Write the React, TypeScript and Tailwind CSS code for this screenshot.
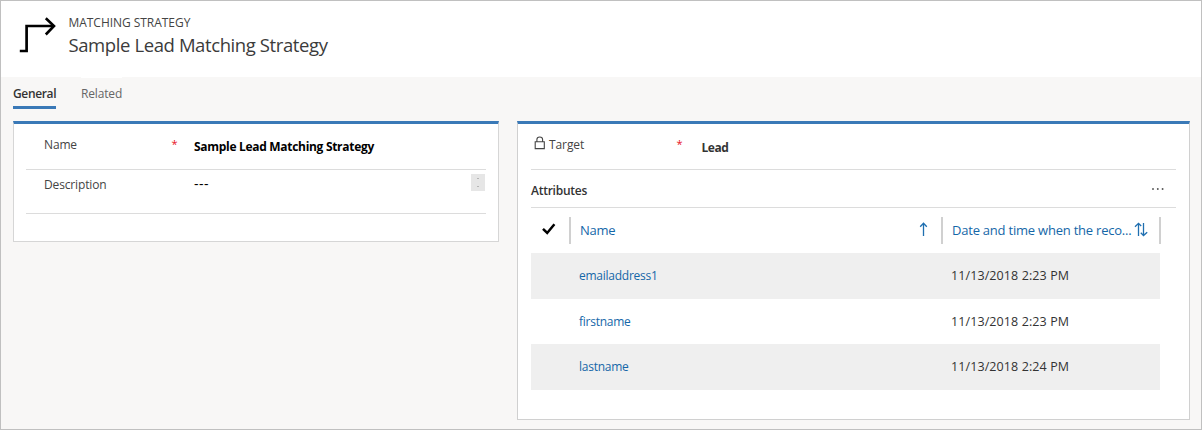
import React from 'react';

const rows = [
  { name: 'emailaddress1', date: '11/13/2018 2:23 PM', shade: true },
  { name: 'firstname', date: '11/13/2018 2:23 PM', shade: false },
  { name: 'lastname', date: '11/13/2018 2:24 PM', shade: true },
];

function SortUp() {
  return (
    <svg width="9" height="15" viewBox="0 0 9 15" fill="none" stroke="#1f6fb0" strokeWidth="1.3">
      <path d="M4.5 14V1.5M1.2 4.8L4.5 1.3L7.8 4.8" />
    </svg>
  );
}

function SortBoth() {
  return (
    <svg width="14" height="15" viewBox="0 0 14 15" fill="none" stroke="#1f6fb0" strokeWidth="1.3">
      <path d="M4.5 14V1.5M1 4.8L4.5 1.3L7.2 4M9.5 1V13.5M6.8 10.8L9.5 13.6L13.2 10.2" />
    </svg>
  );
}

export default function App() {
  return (
    <div className="flex h-[430px] w-[1202px] flex-col overflow-hidden border border-[#c0c0c0] bg-[#f8f7f6] font-['Open_Sans','Noto_Sans',sans-serif] text-[13px] text-[#333]">
      <header className="flex h-[76px] shrink-0 bg-white pl-[18px]">
        <svg className="mt-[15px] shrink-0" width="38" height="38" viewBox="0 0 38 38" fill="none" stroke="#000">
          <path d="M0.8 35H7.6V10H35" strokeWidth="2.7" />
          <path d="M26.8 2.2L35 10L26.8 18.5" strokeWidth="2.6" />
        </svg>
        <div className="ml-[11.5px] pt-[14px]">
          <div className="h-4 whitespace-nowrap text-[12px] leading-4 tracking-[-0.04px] text-[#444]">MATCHING STRATEGY</div>
          <h1 className="mt-px h-[26px] whitespace-nowrap text-[18.5px] leading-[26px] tracking-[-0.4px] text-[#3b3b3b]">Sample Lead Matching Strategy</h1>
        </div>
      </header>

      <nav className="flex h-[44px] shrink-0 pl-[12px] text-[12px] leading-[18px]">
        <div className="h-[32px] w-[43px] border-b-[3px] border-[#3a79b7] pt-[8px] font-semibold tracking-[-0.35px]">General</div>
        <div className="ml-[25px] h-[30px] border-t border-white pt-[7px] tracking-[-0.15px] text-[#666]">Related</div>
      </nav>

      <main className="flex items-start pl-[12px]">
        <section className="h-[121px] w-[486px] border border-t-[3px] border-[#d6d6d6] border-t-[#3a79b7] bg-white px-[12px]">
          <div className="flex h-[46px] border-b border-[#dcdcdc] pl-[18px]">
            <span className="w-[127.5px] pt-[12px] text-[12px] leading-[18px] tracking-[-0.15px] text-[#444]">Name</span>
            <span className="w-[22.5px] pt-[11px] text-[11px] leading-[18px] text-[#e81123]">*</span>
            <span className="whitespace-nowrap pt-[14px] text-[12px] font-bold leading-[18px] tracking-[-0.3px] text-black">Sample Lead Matching Strategy</span>
          </div>
          <div className="flex h-[44px] border-b border-[#dcdcdc] pl-[18px]">
            <span className="w-[150px] pt-[6px] text-[12px] leading-[18px] tracking-[-0.15px] text-[#444]">Description</span>
            <span className="pt-[5px] text-[14px] leading-[18px] tracking-[0.5px] text-black">---</span>
            <div className="ml-auto mt-[4px] mr-[1px] flex h-[17px] w-[14px] flex-col items-center justify-between bg-[#e6e6e6] py-[4px]">
              <i className="h-px w-[2px] bg-[#b5b5b5]" />
              <i className="h-px w-[2px] bg-[#b5b5b5]" />
            </div>
          </div>
        </section>

        <section className="ml-[18px] h-[299px] w-[673px] border border-t-[3px] border-[#d0d0d0] border-t-[#3a79b7] bg-white pl-[13px] pr-[13px]">
          <div className="flex h-[46px] border-b border-[#dcdcdc] pl-[3px]">
            <svg className="mt-[12px] shrink-0" width="12" height="14" viewBox="0 0 12 14" fill="none" stroke="#444" strokeWidth="1.1">
              <path d="M1.2 5.8H10.3V12.6H1.2ZM2.9 5.8V3.6C2.9 .2 8.6 .2 8.6 3.6V5.8" />
            </svg>
            <span className="ml-[3px] w-[127.5px] pt-[12px] text-[12px] leading-[18px] tracking-[-0.1px] text-[#444]">Target</span>
            <span className="w-[25px] pt-[11px] text-[11px] leading-[18px] text-[#e81123]">*</span>
            <span className="pt-[15px] text-[12px] font-bold leading-[18px] tracking-[-0.45px]">Lead</span>
          </div>
          <div className="flex h-[38px] justify-between border-b border-[#dcdcdc] pr-[12px]">
            <span className="pt-[11.5px] text-[12px] font-semibold leading-[18px] tracking-[-0.25px]">Attributes</span>
            <svg className="mt-[17px]" width="12" height="4" viewBox="0 0 12 4" fill="#555">
              <circle cx="1" cy="2" r="0.95" /><circle cx="5.8" cy="2" r="0.95" /><circle cx="10.6" cy="2" r="0.95" />
            </svg>
          </div>
          <div className="mt-[9px] flex h-[27px] w-[630px] items-stretch text-[13px] leading-[18px] text-[#1567a8]">
            <div className="flex w-[38px] pl-[10px] pt-[5px]">
              <svg width="15" height="14" viewBox="0 0 15 14" fill="none" stroke="#000" strokeWidth="2.5">
                <path d="M2 6.8L6.2 11L13.4 2.2" />
              </svg>
            </div>
            <div className="flex w-[372px] border-l-2 border-[#d0d0d0] pl-[9px]">
              <span className="pt-[4px] tracking-[-0.3px]">Name</span>
              <span className="ml-auto mr-[13px] pt-[5px]"><SortUp /></span>
            </div>
            <div className="flex w-[220px] border-x-2 border-[#d0d0d0] pl-[9px]">
              <span className="w-[182px] whitespace-nowrap pt-[4px] tracking-[-0.22px]">Date and time when the reco...</span>
              <span className="pt-[5px]"><SortBoth /></span>
            </div>
          </div>
          <div className="mt-[9px] w-[629px]">
            {rows.map((r) => (
              <div key={r.name} className={r.shade ? 'flex h-[46px] bg-[#efefef] pl-[48px]' : 'flex h-[45px] bg-white pl-[48px]'}>
                <span className="w-[372px] pt-[14px] text-[12px] leading-[18px] tracking-[-0.25px] text-[#1567a8]">{r.name}</span>
                <span className="whitespace-nowrap pt-[14px] text-[12.5px] leading-[18px] tracking-[0.1px]">{r.date}</span>
              </div>
            ))}
          </div>
        </section>
      </main>
    </div>
  );
}
